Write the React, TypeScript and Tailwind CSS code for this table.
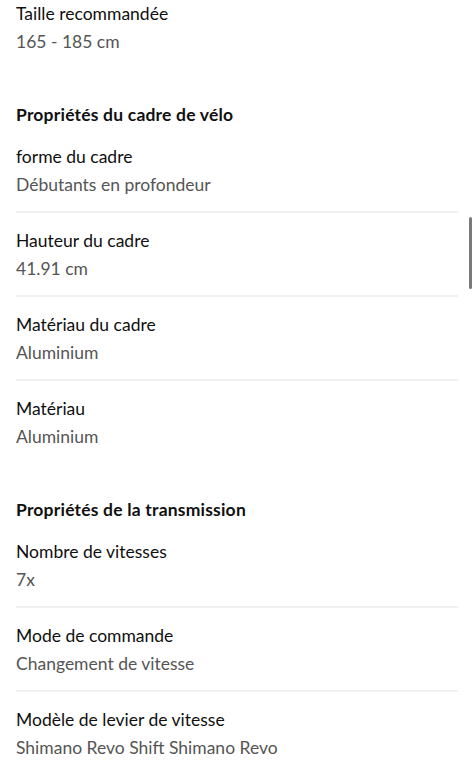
const sections = [
  {
    title: null,
    rows: [{ label: 'Taille recommandée', value: '165 - 185 cm' }],
  },
  {
    title: 'Propriétés du cadre de vélo',
    rows: [
      { label: 'forme du cadre', value: 'Débutants en profondeur' },
      { label: 'Hauteur du cadre', value: '41.91 cm' },
      { label: 'Matériau du cadre', value: 'Aluminium' },
      { label: 'Matériau', value: 'Aluminium' },
    ],
  },
  {
    title: 'Propriétés de la transmission',
    rows: [
      { label: 'Nombre de vitesses', value: '7x' },
      { label: 'Mode de commande', value: 'Changement de vitesse' },
      { label: 'Modèle de levier de vitesse', value: 'Shimano Revo Shift Shimano Revo' },
    ],
  },
]

export default function App() {
  return (
    <div className="relative h-[768px] overflow-hidden bg-white font-['Lato',sans-serif] text-[17.5px] leading-[28px]">
      <div className="flex flex-col gap-[31px] px-4 -mt-[14px]">
        {sections.map((s, i) => (
          <section key={i}>
            {s.title && <h2 className="font-bold tracking-[0.2px] text-[#101010]">{s.title}</h2>}
            <div>
              {s.rows.map((r, j) => (
                <div
                  key={r.label}
                  className={j < s.rows.length - 1 ? 'pt-[14px] pb-[12px] border-b-2 border-[#f0f0f0]' : 'pt-[14px] pb-[14px]'}
                >
                  <div className="text-[#101010]">{r.label}</div>
                  <div className="text-[#555555]">{r.value}</div>
                </div>
              ))}
            </div>
          </section>
        ))}
      </div>
      <div className="absolute right-[2px] top-[217px] h-[72px] w-[3px] rounded-full bg-[#7a7a7a]" />
    </div>
  )
}
